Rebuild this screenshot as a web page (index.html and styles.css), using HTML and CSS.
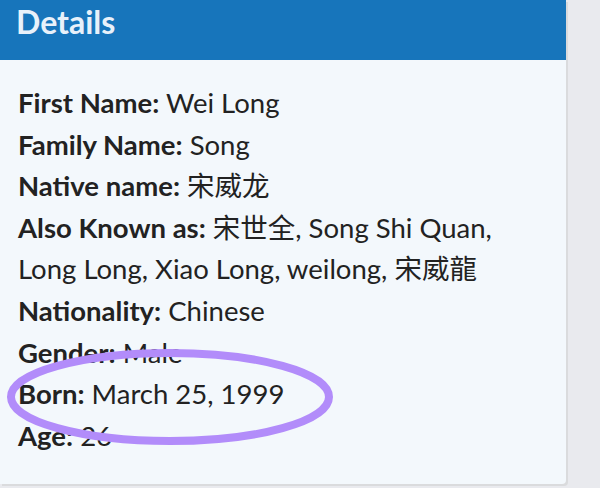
FILE: index.html
```html
<!DOCTYPE html>
<html lang="en">
<head>
<meta charset="utf-8">
<title>Details</title>
<link rel="stylesheet" href="styles.css">
</head>
<body>
<div class="card">
  <div class="card-header">Details</div>
  <div class="card-body">
    <div class="row"><b>First Name:</b> Wei Long</div>
    <div class="row"><b>Family Name:</b> Song</div>
    <div class="row"><b>Native name:</b> 宋威龙</div>
    <div class="row"><b>Also Known as:</b> 宋世全, Song Shi Quan, Long Long, Xiao Long, weilong, 宋威龍</div>
    <div class="row"><b>Nationality:</b> Chinese</div>
    <div class="row"><b>Gender:</b> Male</div>
    <div class="row"><b>Born:</b> March 25, 1999</div>
    <div class="row"><b>Age:</b> 26</div>
    <svg class="circle" width="340" height="110" viewBox="0 0 340 110">
      <ellipse cx="170" cy="55" rx="159" ry="44" fill="none" stroke="#b28cfa" stroke-width="8"/>
    </svg>
  </div>
</div>
</body>
</html>
```
FILE: styles.css
```css
html, body {
  margin: 0;
  padding: 0;
}
body {
  background: #e9eaee;
  font-family: Lato, "Noto Sans CJK SC", sans-serif;
  color: #222;
  height: 488px;
  overflow: hidden;
}
.card {
  width: 566px;
  background: #f3f8fc;
  border-bottom-right-radius: 4px;
  box-shadow: 2px 2px 0 #dadbdd;
}
.card-header {
  height: 60px;
  background: #1775bb;
  color: #e8f1fa;
  font-size: 32px;
  font-weight: 700;
  line-height: 44px;
  padding-left: 16px;
  box-sizing: border-box;
}
.card-body {
  position: relative;
  padding: 22px 18px 28px 18px;
  font-size: 27.5px;
  line-height: 41.6px;
}
.row b {
  font-weight: 700;
}
.circle {
  position: absolute;
  left: 0;
  top: 282px;
}
```
